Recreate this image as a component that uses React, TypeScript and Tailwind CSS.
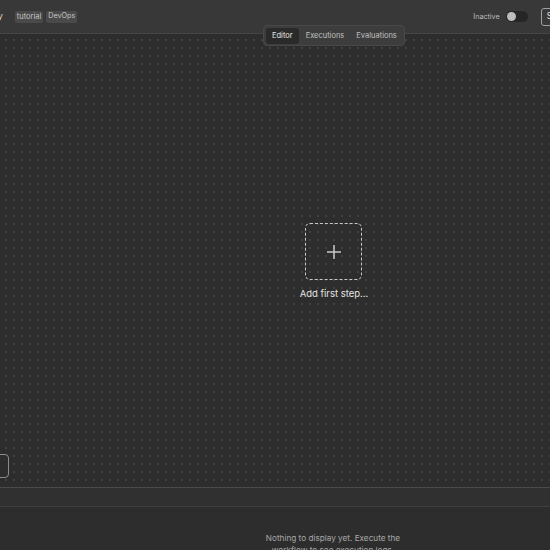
import React from "react";

export default function App() {
  return (
    <div className="relative w-[550px] h-[550px] overflow-hidden bg-[#2d2d2d] text-[#e0e0e0]" style={{ fontFamily: "Inter, 'Liberation Sans', sans-serif" }}>
      <div className="flex flex-col h-full">
        {/* Header */}
        <div className="h-[34px] shrink-0 flex items-center justify-between bg-[#383838] border-b border-[#464646]">
          <div className="flex items-center gap-[3px] -ml-[46px]">
            <span className="text-[8.5px] text-[#ddd] mr-[9px]">My Strategy</span>
            <span className="px-[2px] h-[12px] flex items-center rounded-[2px] bg-[#4a4a4a] text-[7.5px] text-[#c4c4c4]">tutorial</span>
            <span className="px-[2px] h-[12px] flex items-center rounded-[2px] bg-[#4a4a4a] text-[7.2px] text-[#c4c4c4]">DevOps</span>
          </div>
          <div className="flex items-center -mr-[26px]">
            <span className="text-[7.2px] leading-[12px] pt-[1px] text-[#bdbdbd] mr-[6px]">Inactive</span>
            <div className="w-[22px] h-[11px] rounded-full bg-[#262626] flex items-center px-[1px] mr-[13px]">
              <div className="w-[9px] h-[9px] rounded-full bg-[#bdbdbd]" />
            </div>
            <div className="h-[18px] px-[5px] flex items-center rounded-[3px] border border-[#a0a0a0] text-[8.5px] text-[#ddd]">Share</div>
          </div>
        </div>
        {/* Canvas */}
        <div className="relative flex-1 bg-[#2d2d2d] bg-[radial-gradient(circle,#424242_0.8px,transparent_0.9px)] bg-[size:8px_8px] bg-[position:2px_2px] border-b border-[#4a4a4a]">
          <div className="absolute left-[305px] top-[189px] flex flex-col items-center">
            <div className="w-[57px] h-[57px] rounded-[5px] border border-dashed border-[#c8c8c8] flex items-center justify-center">
              <svg width="16" height="16" viewBox="0 0 16 16">
                <path d="M8 1v14M1 8h14" stroke="#c8c8c8" strokeWidth="1.5" />
              </svg>
            </div>
          </div>
          <div className="absolute left-[284px] top-[253px] w-[100px] text-center text-[9.5px] text-[#e4e4e4]">Add first step...</div>
          <div className="absolute -left-[15px] top-[420px] w-[24px] h-[24px] rounded-[4px] border border-[#8c8c8c] bg-[#2d2d2d] flex items-center justify-center text-[10px] text-[#ccc]">−</div>
        </div>
        {/* Logs header */}
        <div className="h-[19px] shrink-0 bg-[#303030] border-b border-[#3e3e3e]" />
        {/* Logs body */}
        <div className="h-[43px] shrink-0 bg-[#2d2d2d] flex justify-center pl-[116px]">
          <p className="mt-[25px] w-[136px] text-center text-[8.2px] leading-[12px] text-[#a8a8a8]">Nothing to display yet. Execute the workflow to see execution logs.</p>
        </div>
      </div>
      {/* Tabs */}
      <div className="absolute left-[263px] top-[25px] h-[21px] flex items-center gap-[2px] px-[2px] rounded-[4px] bg-[#3d3d3d] border border-[#484848]">
        <div className="h-[16px] px-[6px] flex items-center rounded-[3px] bg-[#2a2a2a] text-[7.5px] text-[#e8e8e8]">Editor</div>
        <div className="h-[16px] px-[5px] flex items-center text-[7.5px] text-[#c0c0c0]">Executions</div>
        <div className="h-[16px] px-[5px] flex items-center text-[7.5px] text-[#c0c0c0]">Evaluations</div>
      </div>
    </div>
  );
}
